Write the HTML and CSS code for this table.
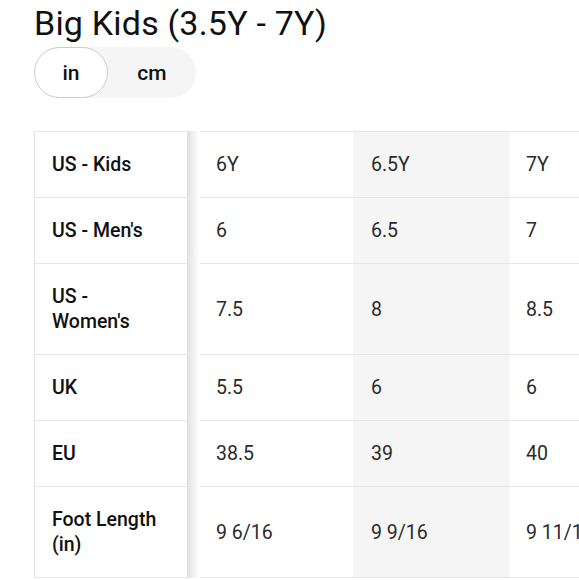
FILE: index.html
```html
<!DOCTYPE html>
<html lang="en">
<head>
<meta charset="utf-8">
<title>Big Kids size chart</title>
<link rel="stylesheet" href="styles.css">
</head>
<body>
<h1 class="title">Big Kids (3.5Y - 7Y)</h1>
<div class="toggle">
  <button class="toggle-btn active">in</button>
  <button class="toggle-btn cm">cm</button>
</div>
<div class="table-wrap">
  <table class="chart">
    <colgroup>
      <col class="c-head"><col class="c-a"><col class="c-b"><col class="c-c">
    </colgroup>
    <tbody>
      <tr class="r-short"><th>US - Kids</th><td class="a">6Y</td><td class="b">6.5Y</td><td class="c">7Y</td></tr>
      <tr class="r-short"><th>US - Men's</th><td class="a">6</td><td class="b">6.5</td><td class="c">7</td></tr>
      <tr class="r-tall"><th>US -<br>Women's</th><td class="a">7.5</td><td class="b">8</td><td class="c">8.5</td></tr>
      <tr class="r-short"><th>UK</th><td class="a">5.5</td><td class="b">6</td><td class="c">6</td></tr>
      <tr class="r-short"><th>EU</th><td class="a">38.5</td><td class="b">39</td><td class="c">40</td></tr>
      <tr class="r-tall last"><th>Foot Length<br>(in)</th><td class="a">9 6/16</td><td class="b">9 9/16</td><td class="c">9 11/16</td></tr>
    </tbody>
  </table>
  <div class="sticky-shadow"></div>
</div>
</body>
</html>
```
FILE: styles.css
```css
html, body {
  margin: 0;
  padding: 0;
  background: #ffffff;
}
body {
  font-family: Roboto, "Liberation Sans", Arial, sans-serif;
  color: #111111;
  padding-left: 34px;
  width: 545px;
  overflow: hidden;
}
.title {
  margin: 0;
  padding-top: 3px;
  font-size: 34px;
  font-weight: 400;
  line-height: 40px;
  color: #111111;
  letter-spacing: 0.2px;
}
.toggle {
  display: inline-flex;
  margin-top: 4px;
  background: #f5f5f5;
  border-radius: 26px;
  height: 51px;
}
.toggle-btn {
  font-family: inherit;
  font-size: 21px;
  font-weight: 500;
  color: #111111;
  border: 1px solid transparent;
  background: transparent;
  border-radius: 26px;
  padding: 0;
  height: 51px;
  cursor: pointer;
}
.toggle-btn.active {
  width: 74px;
  background: #ffffff;
  border-color: #cccccc;
}
.toggle-btn.cm {
  width: 88px;
}
.table-wrap {
  position: relative;
  margin-top: 33px;
  overflow: hidden;
  border-left: 1px solid #e3e3e3;
}
.chart {
  border-collapse: collapse;
  table-layout: fixed;
  width: 633px;
  font-size: 19.5px;
}
.c-head { width: 152px; }
.c-a { width: 166px; }
.c-b { width: 157px; }
.c-c { width: 158px; }
.chart tr {
  border-top: 1px solid #e6e6e6;
}
.chart tr.last {
  border-bottom: 1px solid #e6e6e6;
}
.r-short { height: 66px; }
.r-tall { height: 91px; }
.chart th {
  text-align: left;
  font-weight: 500;
  color: #111111;
  padding: 0 10px 0 17px;
  line-height: 25px;
  vertical-align: middle;
  white-space: nowrap;
}
.chart td {
  color: #2a2a2a;
  font-weight: 400;
  vertical-align: middle;
  white-space: nowrap;
  line-height: 25px;
}
.chart td.a { padding-left: 29px; }
.chart td.b { padding-left: 18px; background: #f5f5f5; }
.chart td.c { padding-left: 16px; }
.sticky-shadow {
  position: absolute;
  top: 0;
  bottom: 0;
  left: 152px;
  width: 13px;
  background: linear-gradient(to right, #dedede 0%, #ececec 35%, #fbfbfb 80%, #ffffff 100%);
}
```
